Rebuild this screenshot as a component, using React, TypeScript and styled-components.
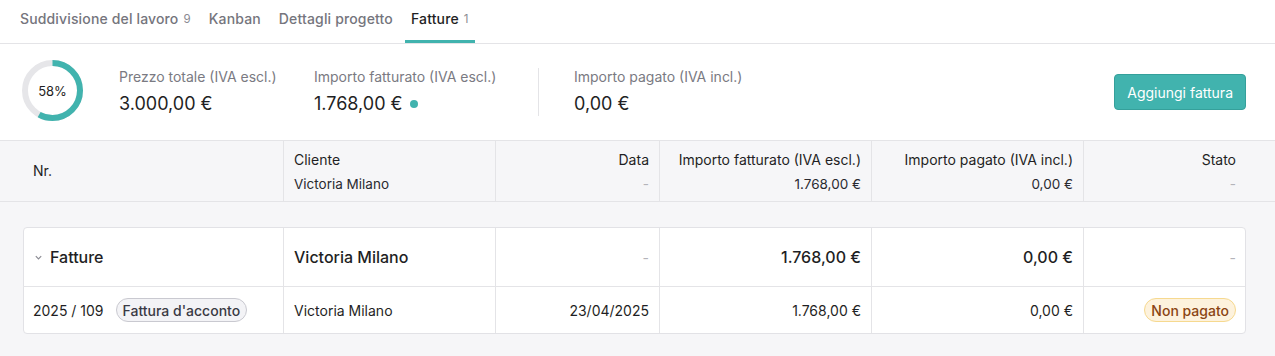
import React from 'react';
import styled, { createGlobalStyle } from 'styled-components';

const GlobalStyle = createGlobalStyle`
  body {
    margin: 0;
    font-family: Inter, "Noto Sans", sans-serif;
    color: #1f1f24;
    background: #ffffff;
  }
`;

const TEAL = '#41b3ae';
const COLS = '260px 212px 164px 212px 212px 163px';

const Tabs = styled.div`
  display: flex;
  gap: 18px;
  height: 43px;
  padding: 0 20px;
  border-bottom: 1px solid #e4e4e7;
`;

const Tab = styled.div<{ $active?: boolean }>`
  display: flex;
  align-items: center;
  gap: 5px;
  padding: 0 ${p => (p.$active ? '6px' : '0')} 3px;
  margin: 0 ${p => (p.$active ? '-6px' : '0')};
  font-size: 14px;
  font-weight: 500;
  letter-spacing: 0.15px;
  color: ${p => (p.$active ? '#1f1f24' : '#75757d')};
  border-bottom: 3px solid ${p => (p.$active ? TEAL : 'transparent')};
  box-sizing: border-box;
`;

const Count = styled.span`
  font-size: 11.5px;
  font-weight: 400;
  color: #8a8a92;
`;

const Summary = styled.div`
  display: flex;
  align-items: center;
  height: 96px;
  padding: 0 29px 0 22px;
  border-bottom: 1px solid #e4e4e7;
`;

const Ring = styled.div`
  position: relative;
  width: 61px;
  height: 61px;
  margin-right: 36px;
  margin-top: -3px;
`;

const RingLabel = styled.div`
  position: absolute;
  inset: 0;
  display: flex;
  align-items: center;
  justify-content: center;
  font-size: 13px;
  color: #1f1f24;
`;

const Stat = styled.div<{ $width?: number; $divider?: boolean }>`
  display: flex;
  flex-direction: column;
  gap: 8px;
  width: ${p => (p.$width ? `${p.$width}px` : 'auto')};
  padding: ${p => (p.$divider ? '1px 0 1px 35px' : '0')};
  border-left: ${p => (p.$divider ? '1px solid #e4e4e7' : 'none')};
  margin-top: -1px;
`;

const StatLabel = styled.div`
  font-size: 14px;
  color: #7a7a82;
  line-height: 16px;
`;

const StatValue = styled.div`
  display: flex;
  align-items: center;
  gap: 7px;
  font-size: 18px;
  color: #1f1f24;
  line-height: 22px;
`;

const Dot = styled.span`
  width: 8px;
  height: 8px;
  border-radius: 50%;
  background: ${TEAL};
`;

const Spacer = styled.div`
  flex: 1;
`;

const Button = styled.button`
  height: 36px;
  padding: 0 12px;
  border: 1px solid #35a09b;
  border-radius: 4px;
  background: ${TEAL};
  color: #ffffff;
  font-family: inherit;
  font-size: 14px;
`;

const HeaderRow = styled.div`
  display: grid;
  grid-template-columns: ${COLS};
  height: 60px;
  padding: 0 29px 0 23px;
  background: #f6f6f8;
  border-bottom: 1px solid #e4e4e7;
`;

const HeadCell = styled.div<{ $right?: boolean; $first?: boolean }>`
  display: flex;
  flex-direction: column;
  justify-content: ${p => (p.$first ? 'center' : 'flex-start')};
  align-items: ${p => (p.$right ? 'flex-end' : 'flex-start')};
  padding: ${p => (p.$first ? '0' : '11px')} 10px 0;
  border-left: ${p => (p.$first ? 'none' : '1px solid #e4e4e7')};
  font-size: 14px;
  line-height: 16px;
  gap: 8px;
`;

const HeadSub = styled.div<{ $muted?: boolean }>`
  font-size: 13.5px;
  color: ${p => (p.$muted ? '#b4b4ba' : '#2a2a30')};
`;

const Body = styled.div`
  background: #f6f6f8;
  padding: 25px 29px 24px 23px;
`;

const Card = styled.div`
  background: #ffffff;
  border: 1px solid #e2e2e6;
  border-radius: 4px;
`;

const Row = styled.div<{ $group?: boolean }>`
  display: grid;
  grid-template-columns: ${COLS};
  margin-left: -1px;
  height: ${p => (p.$group ? '58px' : '46px')};
  border-bottom: ${p => (p.$group ? '1px solid #e4e4e7' : 'none')};
`;

const Cell = styled.div<{ $right?: boolean; $first?: boolean; $group?: boolean; $muted?: boolean }>`
  display: flex;
  align-items: center;
  justify-content: ${p => (p.$right ? 'flex-end' : 'flex-start')};
  gap: 12px;
  padding: 0 10px;
  border-left: ${p => (p.$first ? 'none' : '1px solid #e4e4e7')};
  font-size: ${p => (p.$group ? '16px' : '14px')};
  font-weight: ${p => (p.$group ? 500 : 400)};
  color: ${p => (p.$muted ? '#b4b4ba' : '#1f1f24')};
`;

const Chevron = styled.span`
  display: inline-flex;
  margin: 0 -5px 0 1px;
`;

const Pill = styled.span<{ $tone: 'neutral' | 'warn' }>`
  display: inline-flex;
  align-items: center;
  height: 22px;
  padding: 0 6px;
  border-radius: 12px;
  font-size: 14px;
  font-weight: 500;
  border: 1px solid ${p => (p.$tone === 'warn' ? '#f6d98f' : '#c9c9d0')};
  background: ${p => (p.$tone === 'warn' ? '#fdf2dd' : '#f3f3f6')};
  color: ${p => (p.$tone === 'warn' ? '#8b4513' : '#3a3a44')};
`;

const ProgressRing: React.FC<{ value: number }> = ({ value }) => {
  const r = 27.5;
  const c = 2 * Math.PI * r;
  return (
    <Ring>
      <svg width="61" height="61" viewBox="0 0 61 61">
        <circle cx="30.5" cy="30.5" r={r} fill="none" stroke="#e6e6e9" strokeWidth="6" />
        <circle
          cx="30.5"
          cy="30.5"
          r={r}
          fill="none"
          stroke={TEAL}
          strokeWidth="6"
          strokeDasharray={`${(c * value) / 100} ${c}`}
          transform="rotate(-90 30.5 30.5)"
        />
      </svg>
      <RingLabel>{value}%</RingLabel>
    </Ring>
  );
};

export default function App() {
  return (
    <>
      <GlobalStyle />
      <Tabs>
        <Tab>Suddivisione del lavoro <Count>9</Count></Tab>
        <Tab>Kanban</Tab>
        <Tab>Dettagli progetto</Tab>
        <Tab $active>Fatture <Count>1</Count></Tab>
      </Tabs>

      <Summary>
        <ProgressRing value={58} />
        <Stat $width={195}>
          <StatLabel>Prezzo totale (IVA escl.)</StatLabel>
          <StatValue>3.000,00 €</StatValue>
        </Stat>
        <Stat $width={224}>
          <StatLabel>Importo fatturato (IVA escl.)</StatLabel>
          <StatValue>1.768,00 € <Dot /></StatValue>
        </Stat>
        <Stat $divider>
          <StatLabel>Importo pagato (IVA incl.)</StatLabel>
          <StatValue>0,00 €</StatValue>
        </Stat>
        <Spacer />
        <Button>Aggiungi fattura</Button>
      </Summary>

      <HeaderRow>
        <HeadCell $first>Nr.</HeadCell>
        <HeadCell>
          Cliente
          <HeadSub>Victoria Milano</HeadSub>
        </HeadCell>
        <HeadCell $right>
          Data
          <HeadSub $muted>-</HeadSub>
        </HeadCell>
        <HeadCell $right>
          Importo fatturato (IVA escl.)
          <HeadSub>1.768,00 €</HeadSub>
        </HeadCell>
        <HeadCell $right>
          Importo pagato (IVA incl.)
          <HeadSub>0,00 €</HeadSub>
        </HeadCell>
        <HeadCell $right>
          Stato
          <HeadSub $muted>-</HeadSub>
        </HeadCell>
      </HeaderRow>

      <Body>
        <Card>
          <Row $group>
            <Cell $first $group>
              <Chevron>
                <svg width="9" height="9" viewBox="0 0 10 10">
                  <path d="M2 3.5 L5 6.5 L8 3.5" fill="none" stroke="#8a8a92" strokeWidth="1.3" />
                </svg>
              </Chevron>
              Fatture
            </Cell>
            <Cell $group>Victoria Milano</Cell>
            <Cell $right $muted>-</Cell>
            <Cell $right $group>1.768,00 €</Cell>
            <Cell $right $group>0,00 €</Cell>
            <Cell $right $muted>-</Cell>
          </Row>
          <Row>
            <Cell $first>
              2025 / 109
              <Pill $tone="neutral">Fattura d'acconto</Pill>
            </Cell>
            <Cell>Victoria Milano</Cell>
            <Cell $right>23/04/2025</Cell>
            <Cell $right>1.768,00 €</Cell>
            <Cell $right>0,00 €</Cell>
            <Cell $right>
              <Pill $tone="warn">Non pagato</Pill>
            </Cell>
          </Row>
        </Card>
      </Body>
    </>
  );
}
